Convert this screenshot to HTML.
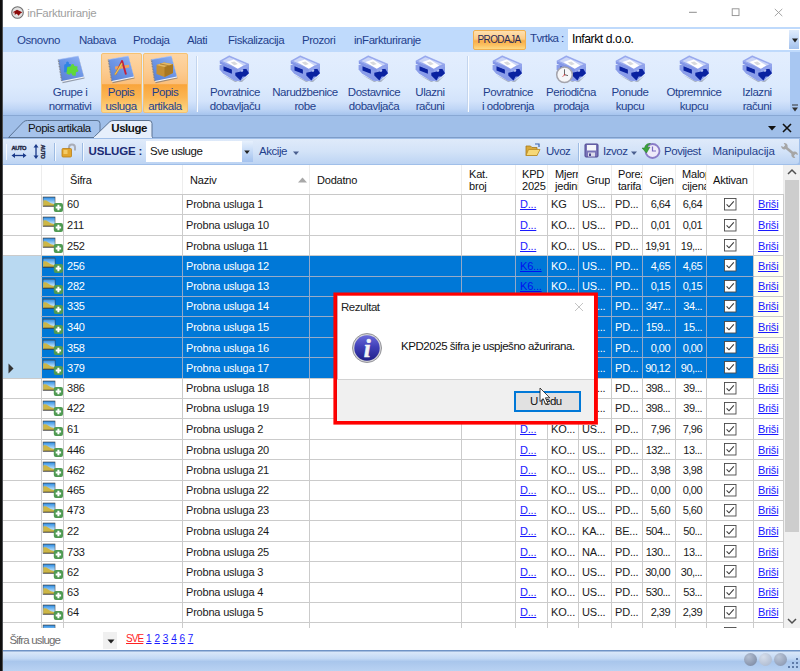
<!DOCTYPE html>
<html lang="hr"><head><meta charset="utf-8"><title>inFarkturiranje</title>
<style>
html,body{margin:0;padding:0;}
body{width:800px;height:671px;overflow:hidden;background:#fff;position:relative;font-family:"Liberation Sans",sans-serif;font-size:11.5px;letter-spacing:-0.45px;color:#111;}
.a{position:absolute;}
.t{position:absolute;white-space:nowrap;line-height:1;}
#desk{left:0;top:0;width:3px;height:671px;background:linear-gradient(to right,#0d0d0d 0,#101010 2px,#8a8f96 3px);}
#title{left:3px;top:0;width:797px;height:27px;background:#fff;}
#menubar{left:3px;top:27px;width:797px;height:25px;background:#bfdafc;}
.mi{position:absolute;top:35px;font-size:11.5px;color:#1f3f8c;white-space:nowrap;line-height:1;}
#ribbon{left:3px;top:52px;width:786.5px;height:62.5px;background:linear-gradient(#e3eefe 0,#dceafd 55%,#d3e3fb 78%,#c0d6f6 90%,#a6c4ee 100%);border-radius:0 0 3px 3px;}
.rb{position:absolute;font-size:11.5px;color:#1f3f8c;text-align:center;line-height:14px;white-space:nowrap;}
.hot{position:absolute;top:53px;height:60px;background:linear-gradient(#fdd5a4 0,#fccb90 30%,#fbbf7a 51%,#f9a53c 53%,#fbb654 75%,#fdd98a 100%);border:1px solid #f6c272;box-sizing:border-box;border-radius:2px;}
#tabstrip{left:3px;top:115px;width:797px;height:23px;background:#a0bfe9;}
#toolbar{left:3px;top:139px;width:795.5px;height:24.5px;background:linear-gradient(#dfeafa 0,#d3e3f8 50%,#bdd4f3 100%);border-radius:0 0 3px 0;}
#grid{left:3px;top:165px;width:781px;height:463px;background:#fff;overflow:hidden;}
.vl{position:absolute;width:1px;background:#cbcbcb;top:0;}
.hl{position:absolute;height:1px;background:#cbcbcb;left:38px;}
.hs{position:absolute;height:1px;background:#98abc8;left:38px;}
.vs{position:absolute;width:1px;background:#93a8c8;}
.c{position:absolute;white-space:nowrap;line-height:1;font-size:11px;letter-spacing:-0.2px;}
.lnk{color:#1a1aff;text-decoration:underline;}
.sel{position:absolute;background:#0078d7;}
.sel .c{color:#fff;}
</style></head><body>
<svg width="0" height="0" style="position:absolute"><defs>
<g id="rowic"><rect x="0.800" y="0.700" width="12.500" height="10" fill="#3c3c3c"/><rect x="1.300" y="1.400" width="11.500" height="8.600" fill="url(#sky)"/><path d="M1.300 9.700 V4.600 Q3.500 3.400 6 5.400 T12.800 8.200 V9.700 Z" fill="#cdb646"/><path d="M1.300 10 H12.800 V9.300 H1.300 Z" fill="#8f7c28"/><rect x="11.800" y="7" width="9.200" height="9" rx="2" fill="#4f9a52"/><path d="M16.400 8.800 V14.200 M13.700 11.500 H19.100" stroke="#fff" stroke-width="2"/></g>
<linearGradient id="sky" x1="0" y1="0" x2="0" y2="1"><stop offset="0" stop-color="#2f8fe6"/><stop offset="0.600" stop-color="#a6d3f5"/><stop offset="1" stop-color="#d6ecfb"/></linearGradient>
</defs></svg>

<div class="a" id="desk"></div>
<div class="a" id="title"></div>
<svg class="a" style="left:10.750px;top:5.600px" width="13" height="13" viewBox="0 0 13 13"><circle cx="6.500" cy="6.500" r="5.800" fill="#e2e2e2" stroke="#6f6f6f" stroke-width="1.100"/><path d="M1.800 6.300 L6 3.700 L11.300 6.300 L9.400 7.600 L7.600 9.700 L5.800 7.700 L3.800 8.700 Z" fill="#8b0a0a"/><path d="M2 6.600 L3.600 6.600 L3.800 8.400 L2.600 8.200 Z" fill="#f0dede"/></svg>
<div class="t" style="left:27.300px;top:8px;font-size:11.5px;letter-spacing:-0.3px;color:#a0a0a0">inFarkturiranje</div>
<svg class="a" style="left:686px;top:4px" width="100" height="16" viewBox="0 0 100 16"><path d="M3 8.300 H10.800" stroke="#8e8e8e" stroke-width="1" fill="none"/><rect x="46.200" y="4.800" width="6.800" height="6.800" stroke="#8e8e8e" stroke-width="0.900" fill="none"/><path d="M88.800 4.900 L96.300 12.100 M96.300 4.900 L88.800 12.100" stroke="#9a9a9a" stroke-width="0.900" fill="none"/></svg>
<div class="a" id="menubar"></div>
<div class="mi" style="left:17px">Osnovno</div>
<div class="mi" style="left:79px">Nabava</div>
<div class="mi" style="left:133px">Prodaja</div>
<div class="mi" style="left:187px">Alati</div>
<div class="mi" style="left:228px">Fiskalizacija</div>
<div class="mi" style="left:302px">Prozori</div>
<div class="mi" style="left:354px">inFarkturiranje</div>
<div class="a" style="left:473px;top:30px;width:52.5px;height:19.5px;box-sizing:border-box;border:1px solid #f0b050;border-radius:2px;background:linear-gradient(#fee0b0 0,#fccb86 45%,#f9ad48 55%,#fbc263 80%,#fdda85 100%)"></div>
<div class="t" style="left:477.5px;top:35px;font-size:10px;letter-spacing:-0.6px;color:#2a2a55">PRODAJA</div>
<div class="t" style="left:530px;top:33px;font-size:11.5px;letter-spacing:-0.6px;color:#1f3f8c">Tvrtka :</div>
<div class="a" style="left:567.500px;top:29px;width:232.500px;height:21px;background:#fff"></div>
<div class="t" style="left:572px;top:33px;font-size:12.2px;color:#000">Infarkt d.o.o.</div>
<div class="a" style="left:789px;top:29.500px;width:9.750px;height:19.500px;background:linear-gradient(#e0ecfc,#c3d8f6 50%,#a3c1ec)"></div>
<svg class="a" style="left:791px;top:38px" width="8" height="5"><path d="M1 0.5 H7 L4 4.5 Z" fill="#222"/></svg>
<div class="a" style="left:3px;top:52px;width:797px;height:63px;background:#a8c7f2"></div>
<div class="a" id="ribbon"></div>
<div class="hot" style="left:100.5px;width:41.5px"></div>
<div class="hot" style="left:143px;width:44.5px"></div>
<div class="a" style="left:196px;top:56px;width:1px;height:56px;background:#c3d5ee"></div><div class="a" style="left:197px;top:56px;width:1px;height:56px;background:#fafcff"></div>
<div class="a" style="left:467px;top:56px;width:1px;height:56px;background:#c3d5ee"></div><div class="a" style="left:468px;top:56px;width:1px;height:56px;background:#fafcff"></div>
<div class="rb" style="left:20px;top:85px;width:100px">Grupe i<br>normativi</div>
<div class="rb" style="left:71px;top:85px;width:100px">Popis<br>usluga</div>
<div class="rb" style="left:115px;top:85px;width:100px">Popis<br>artikala</div>
<div class="rb" style="left:185px;top:85px;width:100px">Povratnice<br>dobavljaču</div>
<div class="rb" style="left:255px;top:85px;width:100px">Narudžbenice<br>robe</div>
<div class="rb" style="left:324px;top:85px;width:100px">Dostavnice<br>dobavljača</div>
<div class="rb" style="left:380px;top:85px;width:100px">Ulazni<br>računi</div>
<div class="rb" style="left:458px;top:85px;width:100px">Povratnice<br>i odobrenja</div>
<div class="rb" style="left:521px;top:85px;width:100px">Periodična<br>prodaja</div>
<div class="rb" style="left:580px;top:85px;width:100px">Ponude<br>kupcu</div>
<div class="rb" style="left:644px;top:85px;width:100px">Otpremnice<br>kupcu</div>
<div class="rb" style="left:707px;top:85px;width:100px">Izlazni<br>računi</div>
<svg class="a" style="left:50px;top:52px" width="40" height="34" viewBox="0 0 40 34">
<defs><linearGradient id="nbg" x1="1" y1="0" x2="0.200" y2="1"><stop offset="0" stop-color="#93b4f6"/><stop offset="0.500" stop-color="#6f97e6"/><stop offset="1" stop-color="#5a82d6"/></linearGradient></defs>
<path d="M9 8.800 L28.800 5.200 L34.600 26.600 L12.600 31.200 Z" fill="#5a5f6c" opacity="0.550"/>
<path d="M8.900 8 L28.400 4.100 L34.200 25.400 L12.300 29.900 Z" fill="#f2f4f8"/>
<path d="M8.400 7.600 L28.400 4.100 L33.800 24.600 L11.700 29 Z" fill="url(#nbg)"/>
<path d="M8.400 7.600 L11.700 29" stroke="#7d818c" stroke-width="1.500" stroke-dasharray="0.900 0.700"/>
<path d="M8.400 7.600 L28.400 4.100" stroke="#a9c3f8" stroke-width="0.600"/>
<g transform="translate(21.300 16.800) scale(1.050) translate(-20.800 -16.600)"><path d="M14 13.500 Q14 12 15.500 12 L16 12 Q15.400 9.600 17.200 9.600 Q19 9.600 18.600 12 L20.300 12 L20.300 20 L14 20 Z" fill="#2f84e4"/><path d="M17 15 L20.500 14.200 Q20 12.200 22 12 Q24 12 23.600 14 L26.800 14.400 L26.400 17 Q28.200 17.200 27.400 19 Q26.600 20 25.400 19.400 L24.800 23.400 L21.600 22.800 Q21.800 20.800 20.400 20.800 Q19 20.800 19.200 22.400 L16.200 21 Z" fill="#5fd83a"/></g>
</svg>
<svg class="a" style="left:99.5px;top:52px" width="40" height="34" viewBox="0 0 40 34">
<defs><linearGradient id="nbg" x1="1" y1="0" x2="0.200" y2="1"><stop offset="0" stop-color="#93b4f6"/><stop offset="0.500" stop-color="#6f97e6"/><stop offset="1" stop-color="#5a82d6"/></linearGradient></defs>
<path d="M9 8.800 L28.800 5.200 L34.600 26.600 L12.600 31.200 Z" fill="#5a5f6c" opacity="0.550"/>
<path d="M8.900 8 L28.400 4.100 L34.200 25.400 L12.300 29.900 Z" fill="#f2f4f8"/>
<path d="M8.400 7.600 L28.400 4.100 L33.800 24.600 L11.700 29 Z" fill="url(#nbg)"/>
<path d="M8.400 7.600 L11.700 29" stroke="#7d818c" stroke-width="1.500" stroke-dasharray="0.900 0.700"/>
<path d="M8.400 7.600 L28.400 4.100" stroke="#a9c3f8" stroke-width="0.600"/>
<path d="M15 14.500 L29 12.800 L29.300 15.600 L15.300 17.400 Z" fill="#f2a25a"/><path d="M26 22.500 L22 8.500" fill="none" stroke="#c4203a" stroke-width="1.900"/><path d="M22 8.500 L15.500 22.500" fill="none" stroke="#c4203a" stroke-width="1.400"/><path d="M21.300 11 L15 21.500 L14.600 23.200 L16.200 22.300 L22.600 11.800 Z" fill="#f3ce55" stroke="#b98d20" stroke-width="0.300"/>
</svg>
<svg class="a" style="left:142.8px;top:52px" width="40" height="34" viewBox="0 0 40 34">
<defs><linearGradient id="nbg" x1="1" y1="0" x2="0.200" y2="1"><stop offset="0" stop-color="#93b4f6"/><stop offset="0.500" stop-color="#6f97e6"/><stop offset="1" stop-color="#5a82d6"/></linearGradient></defs>
<path d="M9 8.800 L28.800 5.200 L34.600 26.600 L12.600 31.200 Z" fill="#5a5f6c" opacity="0.550"/>
<path d="M8.900 8 L28.400 4.100 L34.200 25.400 L12.300 29.900 Z" fill="#f2f4f8"/>
<path d="M8.400 7.600 L28.400 4.100 L33.800 24.600 L11.700 29 Z" fill="url(#nbg)"/>
<path d="M8.400 7.600 L11.700 29" stroke="#7d818c" stroke-width="1.500" stroke-dasharray="0.900 0.700"/>
<path d="M8.400 7.600 L28.400 4.100" stroke="#a9c3f8" stroke-width="0.600"/>
<path d="M13.500 13 L21 10.600 L30 12.200 L30 21 L21.500 25 L13.500 22 Z" fill="#c48f34"/><path d="M13.500 13 L21 10.600 L30 12.200 L21.500 15 Z" fill="#e3b866"/><path d="M21.500 15 L30 12.200 L30 21 L21.500 25 Z" fill="#a87722"/><path d="M17 11.900 L25.700 13.700" stroke="#9a6d20" stroke-width="0.700"/>
</svg>
<svg class="a" style="left:214.0px;top:52px" width="40" height="34" viewBox="0 0 40 34">
<path d="M9 23 L21 30 L28 30 L35 23 L30 27 L24 30 Z" fill="#6a7080" opacity="0.450"/>
<path d="M5.600 13 L5.600 17.600 L9 21.500 L20.500 28.800 L23 29 L27 28.800 L31.400 24.600 L35 21 L35 13 Z" fill="#8a9de9"/>
<path d="M9.500 14.300 L17.900 17.500 L17.900 21.700 L9.500 18.500 Z" fill="#0a22a0"/>
<path d="M21.300 20.800 L27 19.600 Q29.600 19.600 28.600 17 L32.400 17 L35 21.300 L31.400 24.500 L28.600 24.500 L26.400 28.500 L21.300 23.500 Z" fill="#0a22a0"/><circle cx="28" cy="18.600" r="1.200" fill="#b4c1f2"/>
<path d="M5.800 9.100 L5.800 11.800 L23.800 20 L23.800 17.200 Z" fill="#8396e6"/>
<path d="M23.800 17.200 L35 12.200 L35 14.400 L23.800 20 Z" fill="#93a5ec"/>
<path d="M5.800 9.100 L15.200 3.800 L35 12.200 L23.800 17.200 Z" fill="#9aabee" stroke="#8597e8" stroke-width="0.500"/>
<path d="M8.400 9.100 L15.300 5.200 L32.400 12.300 L23.700 16.100 Z" fill="#ccd6f7"/>
<path d="M12.400 10.100 L19.800 7.400 L29.200 13.600 L23.800 16.800 Z" fill="#ffffff"/>
<path d="M16.700 10.600 L20.300 9.400 L23.800 11.900 L20.300 13.200 Z" fill="#d9dadd"/>

</svg>
<svg class="a" style="left:285.3px;top:52px" width="40" height="34" viewBox="0 0 40 34">
<path d="M9 23 L21 30 L28 30 L35 23 L30 27 L24 30 Z" fill="#6a7080" opacity="0.450"/>
<path d="M5.600 13 L5.600 17.600 L9 21.500 L20.500 28.800 L23 29 L27 28.800 L31.400 24.600 L35 21 L35 13 Z" fill="#8a9de9"/>
<path d="M9.500 14.300 L17.900 17.500 L17.900 21.700 L9.500 18.500 Z" fill="#0a22a0"/>
<path d="M21.300 20.800 L27 19.600 Q29.600 19.600 28.600 17 L32.400 17 L35 21.300 L31.400 24.500 L28.600 24.500 L26.400 28.500 L21.300 23.500 Z" fill="#0a22a0"/><circle cx="28" cy="18.600" r="1.200" fill="#b4c1f2"/>
<path d="M5.800 9.100 L5.800 11.800 L23.800 20 L23.800 17.200 Z" fill="#8396e6"/>
<path d="M23.800 17.200 L35 12.200 L35 14.400 L23.800 20 Z" fill="#93a5ec"/>
<path d="M5.800 9.100 L15.200 3.800 L35 12.200 L23.800 17.200 Z" fill="#9aabee" stroke="#8597e8" stroke-width="0.500"/>
<path d="M8.400 9.100 L15.300 5.200 L32.400 12.300 L23.700 16.100 Z" fill="#ccd6f7"/>
<path d="M12.400 10.100 L19.800 7.400 L29.200 13.600 L23.800 16.800 Z" fill="#ffffff"/>
<path d="M16.700 10.600 L20.300 9.400 L23.800 11.900 L20.300 13.200 Z" fill="#d9dadd"/>

</svg>
<svg class="a" style="left:352.8px;top:52px" width="40" height="34" viewBox="0 0 40 34">
<path d="M9 23 L21 30 L28 30 L35 23 L30 27 L24 30 Z" fill="#6a7080" opacity="0.450"/>
<path d="M5.600 13 L5.600 17.600 L9 21.500 L20.500 28.800 L23 29 L27 28.800 L31.400 24.600 L35 21 L35 13 Z" fill="#8a9de9"/>
<path d="M9.500 14.300 L17.900 17.500 L17.900 21.700 L9.500 18.500 Z" fill="#0a22a0"/>
<path d="M21.300 20.800 L27 19.600 Q29.600 19.600 28.600 17 L32.400 17 L35 21.300 L31.400 24.500 L28.600 24.500 L26.400 28.500 L21.300 23.500 Z" fill="#0a22a0"/><circle cx="28" cy="18.600" r="1.200" fill="#b4c1f2"/>
<path d="M5.800 9.100 L5.800 11.800 L23.800 20 L23.800 17.200 Z" fill="#8396e6"/>
<path d="M23.800 17.200 L35 12.200 L35 14.400 L23.800 20 Z" fill="#93a5ec"/>
<path d="M5.800 9.100 L15.200 3.800 L35 12.200 L23.800 17.200 Z" fill="#9aabee" stroke="#8597e8" stroke-width="0.500"/>
<path d="M8.400 9.100 L15.300 5.200 L32.400 12.300 L23.700 16.100 Z" fill="#ccd6f7"/>
<path d="M12.400 10.100 L19.800 7.400 L29.200 13.600 L23.800 16.800 Z" fill="#ffffff"/>
<path d="M16.700 10.600 L20.300 9.400 L23.800 11.900 L20.300 13.200 Z" fill="#d9dadd"/>

</svg>
<svg class="a" style="left:409.8px;top:52px" width="40" height="34" viewBox="0 0 40 34">
<path d="M9 23 L21 30 L28 30 L35 23 L30 27 L24 30 Z" fill="#6a7080" opacity="0.450"/>
<path d="M5.600 13 L5.600 17.600 L9 21.500 L20.500 28.800 L23 29 L27 28.800 L31.400 24.600 L35 21 L35 13 Z" fill="#8a9de9"/>
<path d="M9.500 14.300 L17.900 17.500 L17.900 21.700 L9.500 18.500 Z" fill="#0a22a0"/>
<path d="M21.300 20.800 L27 19.600 Q29.600 19.600 28.600 17 L32.400 17 L35 21.300 L31.400 24.500 L28.600 24.500 L26.400 28.500 L21.300 23.500 Z" fill="#0a22a0"/><circle cx="28" cy="18.600" r="1.200" fill="#b4c1f2"/>
<path d="M5.800 9.100 L5.800 11.800 L23.800 20 L23.800 17.200 Z" fill="#8396e6"/>
<path d="M23.800 17.200 L35 12.200 L35 14.400 L23.800 20 Z" fill="#93a5ec"/>
<path d="M5.800 9.100 L15.200 3.800 L35 12.200 L23.800 17.200 Z" fill="#9aabee" stroke="#8597e8" stroke-width="0.500"/>
<path d="M8.400 9.100 L15.300 5.200 L32.400 12.300 L23.700 16.100 Z" fill="#ccd6f7"/>
<path d="M12.400 10.100 L19.800 7.400 L29.200 13.600 L23.800 16.800 Z" fill="#ffffff"/>
<path d="M16.700 10.600 L20.300 9.400 L23.800 11.900 L20.300 13.200 Z" fill="#d9dadd"/>

</svg>
<svg class="a" style="left:487.3px;top:52px" width="40" height="34" viewBox="0 0 40 34">
<path d="M9 23 L21 30 L28 30 L35 23 L30 27 L24 30 Z" fill="#6a7080" opacity="0.450"/>
<path d="M5.600 13 L5.600 17.600 L9 21.500 L20.500 28.800 L23 29 L27 28.800 L31.400 24.600 L35 21 L35 13 Z" fill="#8a9de9"/>
<path d="M9.500 14.300 L17.900 17.500 L17.900 21.700 L9.500 18.500 Z" fill="#0a22a0"/>
<path d="M21.300 20.800 L27 19.600 Q29.600 19.600 28.600 17 L32.400 17 L35 21.300 L31.400 24.500 L28.600 24.500 L26.400 28.500 L21.300 23.500 Z" fill="#0a22a0"/><circle cx="28" cy="18.600" r="1.200" fill="#b4c1f2"/>
<path d="M5.800 9.100 L5.800 11.800 L23.800 20 L23.800 17.200 Z" fill="#8396e6"/>
<path d="M23.800 17.200 L35 12.200 L35 14.400 L23.800 20 Z" fill="#93a5ec"/>
<path d="M5.800 9.100 L15.200 3.800 L35 12.200 L23.800 17.200 Z" fill="#9aabee" stroke="#8597e8" stroke-width="0.500"/>
<path d="M8.400 9.100 L15.300 5.200 L32.400 12.300 L23.700 16.100 Z" fill="#ccd6f7"/>
<path d="M12.400 10.100 L19.800 7.400 L29.200 13.600 L23.800 16.800 Z" fill="#ffffff"/>
<path d="M16.700 10.600 L20.300 9.400 L23.800 11.900 L20.300 13.200 Z" fill="#d9dadd"/>

</svg>
<svg class="a" style="left:610.3px;top:52px" width="40" height="34" viewBox="0 0 40 34">
<path d="M9 23 L21 30 L28 30 L35 23 L30 27 L24 30 Z" fill="#6a7080" opacity="0.450"/>
<path d="M5.600 13 L5.600 17.600 L9 21.500 L20.500 28.800 L23 29 L27 28.800 L31.400 24.600 L35 21 L35 13 Z" fill="#8a9de9"/>
<path d="M9.500 14.300 L17.900 17.500 L17.900 21.700 L9.500 18.500 Z" fill="#0a22a0"/>
<path d="M21.300 20.800 L27 19.600 Q29.600 19.600 28.600 17 L32.400 17 L35 21.300 L31.400 24.500 L28.600 24.500 L26.400 28.500 L21.300 23.500 Z" fill="#0a22a0"/><circle cx="28" cy="18.600" r="1.200" fill="#b4c1f2"/>
<path d="M5.800 9.100 L5.800 11.800 L23.800 20 L23.800 17.200 Z" fill="#8396e6"/>
<path d="M23.800 17.200 L35 12.200 L35 14.400 L23.800 20 Z" fill="#93a5ec"/>
<path d="M5.800 9.100 L15.200 3.800 L35 12.200 L23.800 17.200 Z" fill="#9aabee" stroke="#8597e8" stroke-width="0.500"/>
<path d="M8.400 9.100 L15.300 5.200 L32.400 12.300 L23.700 16.100 Z" fill="#ccd6f7"/>
<path d="M12.400 10.100 L19.800 7.400 L29.200 13.600 L23.800 16.800 Z" fill="#ffffff"/>
<path d="M16.700 10.600 L20.300 9.400 L23.800 11.900 L20.300 13.200 Z" fill="#d9dadd"/>

</svg>
<svg class="a" style="left:673.8px;top:52px" width="40" height="34" viewBox="0 0 40 34">
<path d="M9 23 L21 30 L28 30 L35 23 L30 27 L24 30 Z" fill="#6a7080" opacity="0.450"/>
<path d="M5.600 13 L5.600 17.600 L9 21.500 L20.500 28.800 L23 29 L27 28.800 L31.400 24.600 L35 21 L35 13 Z" fill="#8a9de9"/>
<path d="M9.500 14.300 L17.900 17.500 L17.900 21.700 L9.500 18.500 Z" fill="#0a22a0"/>
<path d="M21.300 20.800 L27 19.600 Q29.600 19.600 28.600 17 L32.400 17 L35 21.300 L31.400 24.500 L28.600 24.500 L26.400 28.500 L21.300 23.500 Z" fill="#0a22a0"/><circle cx="28" cy="18.600" r="1.200" fill="#b4c1f2"/>
<path d="M5.800 9.100 L5.800 11.800 L23.800 20 L23.800 17.200 Z" fill="#8396e6"/>
<path d="M23.800 17.200 L35 12.200 L35 14.400 L23.800 20 Z" fill="#93a5ec"/>
<path d="M5.800 9.100 L15.200 3.800 L35 12.200 L23.800 17.200 Z" fill="#9aabee" stroke="#8597e8" stroke-width="0.500"/>
<path d="M8.400 9.100 L15.300 5.200 L32.400 12.300 L23.700 16.100 Z" fill="#ccd6f7"/>
<path d="M12.400 10.100 L19.800 7.400 L29.200 13.600 L23.800 16.800 Z" fill="#ffffff"/>
<path d="M16.700 10.600 L20.300 9.400 L23.800 11.900 L20.300 13.200 Z" fill="#d9dadd"/>

</svg>
<svg class="a" style="left:736.8px;top:52px" width="40" height="34" viewBox="0 0 40 34">
<path d="M9 23 L21 30 L28 30 L35 23 L30 27 L24 30 Z" fill="#6a7080" opacity="0.450"/>
<path d="M5.600 13 L5.600 17.600 L9 21.500 L20.500 28.800 L23 29 L27 28.800 L31.400 24.600 L35 21 L35 13 Z" fill="#8a9de9"/>
<path d="M9.500 14.300 L17.900 17.500 L17.900 21.700 L9.500 18.500 Z" fill="#0a22a0"/>
<path d="M21.300 20.800 L27 19.600 Q29.600 19.600 28.600 17 L32.400 17 L35 21.300 L31.400 24.500 L28.600 24.500 L26.400 28.500 L21.300 23.500 Z" fill="#0a22a0"/><circle cx="28" cy="18.600" r="1.200" fill="#b4c1f2"/>
<path d="M5.800 9.100 L5.800 11.800 L23.800 20 L23.800 17.200 Z" fill="#8396e6"/>
<path d="M23.800 17.200 L35 12.200 L35 14.400 L23.800 20 Z" fill="#93a5ec"/>
<path d="M5.800 9.100 L15.200 3.800 L35 12.200 L23.800 17.200 Z" fill="#9aabee" stroke="#8597e8" stroke-width="0.500"/>
<path d="M8.400 9.100 L15.300 5.200 L32.400 12.300 L23.700 16.100 Z" fill="#ccd6f7"/>
<path d="M12.400 10.100 L19.800 7.400 L29.200 13.600 L23.800 16.800 Z" fill="#ffffff"/>
<path d="M16.700 10.600 L20.300 9.400 L23.800 11.900 L20.300 13.200 Z" fill="#d9dadd"/>

</svg>
<svg class="a" style="left:550.5px;top:52px" width="40" height="34" viewBox="0 0 40 34">
<path d="M9 23 L21 30 L28 30 L35 23 L30 27 L24 30 Z" fill="#6a7080" opacity="0.450"/>
<path d="M5.600 13 L5.600 17.600 L9 21.500 L20.500 28.800 L23 29 L27 28.800 L31.400 24.600 L35 21 L35 13 Z" fill="#8a9de9"/>
<path d="M9.500 14.300 L17.900 17.500 L17.900 21.700 L9.500 18.500 Z" fill="#0a22a0"/>
<path d="M21.300 20.800 L27 19.600 Q29.600 19.600 28.600 17 L32.400 17 L35 21.300 L31.400 24.500 L28.600 24.500 L26.400 28.500 L21.300 23.500 Z" fill="#0a22a0"/><circle cx="28" cy="18.600" r="1.200" fill="#b4c1f2"/>
<path d="M5.800 9.100 L5.800 11.800 L23.800 20 L23.800 17.200 Z" fill="#8396e6"/>
<path d="M23.800 17.200 L35 12.200 L35 14.400 L23.800 20 Z" fill="#93a5ec"/>
<path d="M5.800 9.100 L15.200 3.800 L35 12.200 L23.800 17.200 Z" fill="#9aabee" stroke="#8597e8" stroke-width="0.500"/>
<path d="M8.400 9.100 L15.300 5.200 L32.400 12.300 L23.700 16.100 Z" fill="#ccd6f7"/>
<path d="M12.400 10.100 L19.800 7.400 L29.200 13.600 L23.800 16.800 Z" fill="#ffffff"/>
<path d="M16.700 10.600 L20.300 9.400 L23.800 11.900 L20.300 13.200 Z" fill="#d9dadd"/>
<circle cx="13.500" cy="22.700" r="7.800" fill="#f6f6f8" stroke="#a4a4ac" stroke-width="1.500"/><path d="M13.500 17.300 V22.700 L17 23.600" stroke="#444" stroke-width="0.800" fill="none"/><path d="M13.500 22.700 L11.400 25" stroke="#c33" stroke-width="0.600"/><circle cx="13.500" cy="22.700" r="0.700" fill="#c33"/>
</svg>
<svg class="a" style="left:791px;top:104px" width="8" height="9"><path d="M1 1 H7" stroke="#333" stroke-width="1"/><path d="M1 3.500 H7 L4 7.500 Z" fill="#333"/></svg>
<div class="a" id="tabstrip"></div>
<div class="a" style="left:3px;top:137px;width:797px;height:1.500px;background:#7d9cc8"></div>
<svg class="a" style="left:3px;top:118px" width="160" height="20" viewBox="0 0 160 20">
<path d="M5.500 19.500 L20.500 3.800 Q22 2.500 24.500 2.500 H94 Q97 2.5 97 5.5 V19.5 Z" fill="#a6c3eb" stroke="#5a7394" stroke-width="1"/>
<path d="M90 20 L107 3.5 Q108.500 2.500 111 2.500 H146 Q149 2.500 149 5.500 V20 Z" fill="#e6effc" stroke="#5a7394" stroke-width="1"/>
<path d="M91 19.5 H149" stroke="#e6effc" stroke-width="1.500"/>
</svg>
<div class="t" style="left:28px;top:123px;font-size:11.5px;color:#111">Popis artikala</div>
<div class="t" style="left:111.300px;top:123px;font-size:11.5px;font-weight:bold;color:#111">Usluge</div>
<svg class="a" style="left:766px;top:122px" width="30" height="12"><path d="M2 4 H10 L6 8.500 Z" fill="#111"/><path d="M17 2 L25 10 M25 2 L17 10" stroke="#111" stroke-width="1.600"/></svg>
<div class="a" style="left:3px;top:138px;width:797px;height:27px;background:#a0bfe9"></div>
<div class="a" style="left:3px;top:114.500px;width:797px;height:1.500px;background:#89a8d4"></div>
<div class="a" id="toolbar"></div>
<div class="a" style="left:6px;top:144px;width:1px;height:16px;background:#f6f9fe"></div>
<svg class="a" style="left:11px;top:144px" width="16" height="15" viewBox="0 0 16 15"><text x="0.500" y="6.300" font-family="Liberation Sans, sans-serif" font-size="6" font-weight="bold" fill="#1c2440" stroke="#1c2440" stroke-width="0.350" textLength="14.500" lengthAdjust="spacingAndGlyphs">AUTO</text><path d="M3 11.500 H13" stroke="#1a3a8a" stroke-width="1.300"/><path d="M0.500 11.500 L4 9 V14 Z M15.500 11.500 L12 9 V14 Z" fill="#1a3a8a"/></svg>
<svg class="a" style="left:32px;top:143px" width="16" height="17" viewBox="0 0 16 17"><path d="M4 3.500 V13.500" stroke="#1a3a8a" stroke-width="1.300"/><path d="M4 1 L1.500 4.500 H6.500 Z M4 16 L1.500 12.500 H6.500 Z" fill="#1a3a8a"/><text transform="translate(9.300 1.500) rotate(90)" font-family="Liberation Sans, sans-serif" font-size="6" font-weight="bold" fill="#1c2440" stroke="#1c2440" stroke-width="0.350" textLength="14" lengthAdjust="spacingAndGlyphs">AUTO</text></svg>
<div class="a" style="left:54px;top:143px;width:1px;height:18px;background:#9dbbe3"></div><div class="a" style="left:55px;top:143px;width:1px;height:18px;background:#f3f8fe"></div>
<svg class="a" style="left:61px;top:143px" width="16" height="15" viewBox="0 0 16 15"><path d="M8 7 V4.500 Q8 1.500 11 1.500 Q14 1.500 14 4.500 V7.500" fill="none" stroke="#a9adb8" stroke-width="2"/><rect x="1" y="5.500" width="9.500" height="8.500" rx="1" fill="#e2a52c" stroke="#b97d14" stroke-width="0.800"/><rect x="2.500" y="7" width="4" height="4" fill="#f4cb66"/></svg>
<div class="a" style="left:82px;top:143px;width:1px;height:18px;background:#9dbbe3"></div><div class="a" style="left:83px;top:143px;width:1px;height:18px;background:#f3f8fe"></div>
<div class="t" id="uslbl" style="left:88.500px;top:146px;font-size:11.5px;letter-spacing:-0.150px;font-weight:bold;color:#1a2a74">USLUGE :</div>
<div class="a" style="left:146px;top:141px;width:96px;height:21px;background:#fff"></div>
<div class="t" id="sveusl" style="left:150px;top:146px;font-size:11.5px;color:#111">Sve usluge</div>
<div class="a" style="left:241.500px;top:141px;width:11px;height:21px;background:linear-gradient(#e6f0fd,#c4d9f6 50%,#a4c2ee)"></div>
<svg class="a" style="left:243px;top:150px" width="8" height="5"><path d="M1.200 0.500 H6.800 L4 4 Z" fill="#222"/></svg>
<div class="t" id="akcije" style="left:259px;top:146px;font-size:11.5px;color:#1f3f8c">Akcije</div>
<svg class="a" style="left:292px;top:151px" width="8" height="5"><path d="M1 0.500 H7 L4 4 Z" fill="#4a5f8f"/></svg>
<svg class="a" style="left:525px;top:143px" width="16" height="14" viewBox="0 0 16 14"><path d="M1 3 H5.500 L7 4.500 H12 V12.500 H1 Z" fill="#d9a93a" stroke="#a67a1c" stroke-width="0.800"/><path d="M3.500 6.500 H15 L12 12.500 H1 Z" fill="#f6d877" stroke="#b88a24" stroke-width="0.800"/><path d="M10 1 H14 V4" fill="none" stroke="#3a64b0" stroke-width="1.200"/></svg>
<div class="t" id="uvoz" style="left:546px;top:146px;font-size:11.5px;color:#1f3f8c">Uvoz</div>
<div class="a" style="left:578px;top:143px;width:1px;height:18px;background:#9dbbe3"></div><div class="a" style="left:579px;top:143px;width:1px;height:18px;background:#f3f8fe"></div>
<svg class="a" style="left:584px;top:143px" width="15" height="15" viewBox="0 0 15 15"><rect x="1" y="1" width="13" height="13" rx="1" fill="#7a74b8" stroke="#4c4790" stroke-width="1"/><rect x="3" y="2" width="9" height="5.500" fill="#f4f5fa"/><rect x="4" y="9.500" width="7" height="4" fill="#dcdcea"/><rect x="5" y="10.500" width="2" height="2.500" fill="#4c4790"/></svg>
<div class="t" id="izvoz" style="left:603px;top:146px;font-size:11.5px;color:#1f3f8c">Izvoz</div>
<svg class="a" style="left:630px;top:151px" width="8" height="5"><path d="M1 0.500 H7 L4 4 Z" fill="#4a5f8f"/></svg>
<svg class="a" style="left:641px;top:142px" width="20" height="17" viewBox="0 0 20 17"><circle cx="11.500" cy="9" r="7" fill="#eeeafa" stroke="#8a7cc8" stroke-width="1.800"/><path d="M11.500 4.500 V9 H15" stroke="#7a6cc0" stroke-width="1.200" fill="none"/><path d="M1 6 L5.500 11 L9 5 L6 5.500 Q6.500 2.500 9.500 1.500 Q4.500 1 3.500 6 Z" fill="#3aa43a" stroke="#2a7a2a" stroke-width="0.500"/></svg>
<div class="t" id="povijest" style="left:664px;top:146px;font-size:11.5px;color:#1f3f8c">Povijest</div>
<div class="t" id="manip" style="left:712.4px;top:146px;font-size:11.5px;letter-spacing:-0.13px;color:#1f3f8c">Manipulacija</div>
<svg class="a" style="left:780px;top:141px" width="19" height="19" viewBox="0 0 19 19"><g transform="rotate(40 9.500 9.500)"><path d="M3.600 8.200 H15.400 V10.800 H3.600 Z" fill="#a6a6a6"/><path d="M0.200 7.500 A3.300 3.300 0 1 1 0.200 11.500 L2.800 10.600 V8.400 Z" fill="#a6a6a6"/><path d="M18.800 7.500 A3.300 3.300 0 1 0 18.800 11.500 L16.200 10.600 V8.400 Z" fill="#a6a6a6"/></g></svg>
<div class="a" id="grid">
<div class="a" style="left:0;top:0;width:781px;height:29px;background:#fff"></div>
<div class="a" style="left:0;top:90px;width:38px;height:123px;background:#b9d9f1"></div>
<div class="a" style="left:38px;top:90px;width:712.5px;height:123px;background:#0078d7"></div>
<div class="vl" style="left:38px;height:463px"></div>
<div class="a" style="left:38px;top:0;width:1px;height:29px;background:#ededed"></div>
<div class="vl" style="left:60px;height:463px"></div>
<div class="a" style="left:60px;top:0;width:1px;height:29px;background:#ededed"></div>
<div class="vs" style="left:60px;top:90px;height:123px"></div>
<div class="vl" style="left:179px;height:463px"></div>
<div class="a" style="left:179px;top:0;width:1px;height:29px;background:#ededed"></div>
<div class="vs" style="left:179px;top:90px;height:123px"></div>
<div class="vl" style="left:306px;height:463px"></div>
<div class="a" style="left:306px;top:0;width:1px;height:29px;background:#ededed"></div>
<div class="vs" style="left:306px;top:90px;height:123px"></div>
<div class="vl" style="left:458px;height:463px"></div>
<div class="a" style="left:458px;top:0;width:1px;height:29px;background:#ededed"></div>
<div class="vs" style="left:458px;top:90px;height:123px"></div>
<div class="vl" style="left:512px;height:463px"></div>
<div class="a" style="left:512px;top:0;width:1px;height:29px;background:#ededed"></div>
<div class="vs" style="left:512px;top:90px;height:123px"></div>
<div class="vl" style="left:544px;height:463px"></div>
<div class="a" style="left:544px;top:0;width:1px;height:29px;background:#ededed"></div>
<div class="vs" style="left:544px;top:90px;height:123px"></div>
<div class="vl" style="left:575px;height:463px"></div>
<div class="a" style="left:575px;top:0;width:1px;height:29px;background:#ededed"></div>
<div class="vs" style="left:575px;top:90px;height:123px"></div>
<div class="vl" style="left:608px;height:463px"></div>
<div class="a" style="left:608px;top:0;width:1px;height:29px;background:#ededed"></div>
<div class="vs" style="left:608px;top:90px;height:123px"></div>
<div class="vl" style="left:639px;height:463px"></div>
<div class="a" style="left:639px;top:0;width:1px;height:29px;background:#ededed"></div>
<div class="vs" style="left:639px;top:90px;height:123px"></div>
<div class="vl" style="left:672px;height:463px"></div>
<div class="a" style="left:672px;top:0;width:1px;height:29px;background:#ededed"></div>
<div class="vs" style="left:672px;top:90px;height:123px"></div>
<div class="vl" style="left:703px;height:463px"></div>
<div class="a" style="left:703px;top:0;width:1px;height:29px;background:#ededed"></div>
<div class="vs" style="left:703px;top:90px;height:123px"></div>
<div class="vl" style="left:750px;height:463px"></div>
<div class="a" style="left:750px;top:0;width:1px;height:29px;background:#ededed"></div>
<div class="vl" style="left:780px;height:463px"></div>
<div class="a" style="left:780px;top:0;width:1px;height:29px;background:#ededed"></div>
<div class="a" style="left:0;top:29px;width:781px;height:1px;background:#c8c8c8"></div>
<div class="hl" style="top:49px;left:0;width:781px"></div>
<div class="hl" style="top:70px;left:0;width:781px"></div>
<div class="hl" style="top:90px;left:0;width:781px"></div>
<div class="hs" style="top:111px;width:713px;"></div>
<div class="hl" style="top:111px;left:751px;width:30px;"></div>
<div class="hs" style="top:131px;width:713px;"></div>
<div class="hl" style="top:131px;left:751px;width:30px;"></div>
<div class="hs" style="top:151px;width:713px;"></div>
<div class="hl" style="top:151px;left:751px;width:30px;"></div>
<div class="hs" style="top:172px;width:713px;"></div>
<div class="hl" style="top:172px;left:751px;width:30px;"></div>
<div class="hs" style="top:192px;width:713px;"></div>
<div class="hl" style="top:192px;left:751px;width:30px;"></div>
<div class="hl" style="top:213px;left:0;width:781px"></div>
<div class="hl" style="top:233px;left:0;width:781px"></div>
<div class="hl" style="top:253px;left:0;width:781px"></div>
<div class="hl" style="top:274px;left:0;width:781px"></div>
<div class="hl" style="top:294px;left:0;width:781px"></div>
<div class="hl" style="top:315px;left:0;width:781px"></div>
<div class="hl" style="top:335px;left:0;width:781px"></div>
<div class="hl" style="top:355px;left:0;width:781px"></div>
<div class="hl" style="top:376px;left:0;width:781px"></div>
<div class="hl" style="top:396px;left:0;width:781px"></div>
<div class="hl" style="top:417px;left:0;width:781px"></div>
<div class="hl" style="top:437px;left:0;width:781px"></div>
<div class="hl" style="top:457px;left:0;width:781px"></div>
<div class="hl" style="top:478px;left:0;width:781px"></div>
<div class="c" style="left:67px;top:10px">Šifra</div>
<div class="c" style="left:187px;top:10px">Naziv</div>
<div class="c" style="left:314px;top:10px">Dodatno</div>
<div class="c" style="left:466px;top:4px">Kat.</div>
<div class="c" style="left:466px;top:16px">broj</div>
<div class="c" style="left:519px;top:4px">KPD</div>
<div class="c" style="left:519px;top:16px">2025</div>
<div class="a" style="left:545px;top:1px;width:29.5px;height:28px;overflow:hidden"><div class="c" style="left:7px;top:3px">Mjerna</div><div class="c" style="left:7px;top:15px">jedinica</div></div>
<div class="a" style="left:576.5px;top:1px;width:30.5px;height:28px;overflow:hidden"><div class="c" style="left:7px;top:9px">Grupa</div></div>
<div class="a" style="left:609px;top:1px;width:29.5px;height:28px;overflow:hidden"><div class="c" style="left:6px;top:3px">Porezna</div><div class="c" style="left:6px;top:15px">tarifa</div></div>
<div class="a" style="left:640.5px;top:1px;width:30.5px;height:28px;overflow:hidden"><div class="c" style="left:6px;top:9px">Cijena</div></div>
<div class="a" style="left:673px;top:1px;width:29.5px;height:28px;overflow:hidden"><div class="c" style="left:6px;top:3px">Malop.</div><div class="c" style="left:6px;top:15px">cijena</div></div>
<div class="c" style="left:710px;top:10px">Aktivan</div>
<svg class="a" style="left:295px;top:12px" width="9" height="6"><path d="M0 5.500 L4.500 0.500 L9 5.500 Z" fill="#a8a8a8"/></svg>
<svg class="a" style="left:39px;top:31px" width="21" height="17" viewBox="0 0 21 17"><use href="#rowic"/></svg>
<div class="c " style="left:64px;top:34px;color:#1a1a1a">60</div>
<div class="c " style="left:183px;top:34px;color:#1a1a1a">Probna usluga 1</div>
<div class="c lnk" style="left:517px;top:34px;color:#1a1aff">D...</div>
<div class="c " style="left:548px;top:34px;color:#1a1a1a">KG</div>
<div class="c " style="left:579px;top:34px;color:#1a1a1a">US...</div>
<div class="c " style="left:612px;top:34px;color:#1a1a1a">PD...</div>
<div class="c" style="right:114px;top:34px;color:#1a1a1a;letter-spacing:-0.55px">6,64</div>
<div class="c" style="right:82px;top:34px;color:#1a1a1a;letter-spacing:-0.55px">6,64</div>
<svg class="a" style="left:721px;top:33px" width="13" height="13" viewBox="0 0 13 13"><rect x="0.500" y="0.500" width="11.500" height="11.500" fill="#fff" stroke="#4a4a4a" stroke-width="0.900"/><path d="M2.600 6.400 L5 8.800 L9.800 3.400" fill="none" stroke="#3a3a3a" stroke-width="1.100"/></svg>
<div class="c lnk" style="left:755px;top:34px;color:#1a1aff">Briši</div>
<svg class="a" style="left:39px;top:51px" width="21" height="17" viewBox="0 0 21 17"><use href="#rowic"/></svg>
<div class="c " style="left:64px;top:55px;color:#1a1a1a">211</div>
<div class="c " style="left:183px;top:55px;color:#1a1a1a">Probna usluga 10</div>
<div class="c lnk" style="left:517px;top:55px;color:#1a1aff">D...</div>
<div class="c " style="left:548px;top:55px;color:#1a1a1a">KO...</div>
<div class="c " style="left:579px;top:55px;color:#1a1a1a">US...</div>
<div class="c " style="left:612px;top:55px;color:#1a1a1a">PD...</div>
<div class="c" style="right:114px;top:55px;color:#1a1a1a;letter-spacing:-0.55px">0,01</div>
<div class="c" style="right:82px;top:55px;color:#1a1a1a;letter-spacing:-0.55px">0,01</div>
<svg class="a" style="left:721px;top:54px" width="13" height="13" viewBox="0 0 13 13"><rect x="0.500" y="0.500" width="11.500" height="11.500" fill="#fff" stroke="#4a4a4a" stroke-width="0.900"/><path d="M2.600 6.400 L5 8.800 L9.800 3.400" fill="none" stroke="#3a3a3a" stroke-width="1.100"/></svg>
<div class="c lnk" style="left:755px;top:55px;color:#1a1aff">Briši</div>
<svg class="a" style="left:39px;top:72px" width="21" height="17" viewBox="0 0 21 17"><use href="#rowic"/></svg>
<div class="c " style="left:64px;top:76px;color:#1a1a1a">252</div>
<div class="c " style="left:183px;top:76px;color:#1a1a1a">Probna usluga 11</div>
<div class="c lnk" style="left:517px;top:76px;color:#1a1aff">D...</div>
<div class="c " style="left:548px;top:76px;color:#1a1a1a">KO...</div>
<div class="c " style="left:579px;top:76px;color:#1a1a1a">US...</div>
<div class="c " style="left:612px;top:76px;color:#1a1a1a">PD...</div>
<div class="c" style="right:114px;top:76px;color:#1a1a1a;letter-spacing:-0.55px">19,91</div>
<div class="c" style="right:82px;top:76px;color:#1a1a1a;letter-spacing:-0.55px">19,...</div>
<svg class="a" style="left:721px;top:74px" width="13" height="13" viewBox="0 0 13 13"><rect x="0.500" y="0.500" width="11.500" height="11.500" fill="#fff" stroke="#4a4a4a" stroke-width="0.900"/><path d="M2.600 6.400 L5 8.800 L9.800 3.400" fill="none" stroke="#3a3a3a" stroke-width="1.100"/></svg>
<div class="c lnk" style="left:755px;top:76px;color:#1a1aff">Briši</div>
<svg class="a" style="left:39px;top:92px" width="21" height="17" viewBox="0 0 21 17"><use href="#rowic"/></svg>
<div class="c " style="left:64px;top:96px;color:#fff">256</div>
<div class="c " style="left:183px;top:96px;color:#fff">Probna usluga 12</div>
<div class="c lnk" style="left:517px;top:96px;color:#0010f0">K6...</div>
<div class="c " style="left:548px;top:96px;color:#fff">KO...</div>
<div class="c " style="left:579px;top:96px;color:#fff">US...</div>
<div class="c " style="left:612px;top:96px;color:#fff">PD...</div>
<div class="c" style="right:114px;top:96px;color:#fff;letter-spacing:-0.55px">4,65</div>
<div class="c" style="right:82px;top:96px;color:#fff;letter-spacing:-0.55px">4,65</div>
<svg class="a" style="left:721px;top:94px" width="13" height="13" viewBox="0 0 13 13"><rect x="0.500" y="0.500" width="11.500" height="11.500" fill="#fff" stroke="#4a4a4a" stroke-width="0.900"/><path d="M2.600 6.400 L5 8.800 L9.800 3.400" fill="none" stroke="#3a3a3a" stroke-width="1.100"/></svg>
<div class="a" style="left:751px;top:91px;width:29px;height:20px;background:#fffff2"></div>
<div class="c lnk" style="left:755px;top:96px;color:#1a1aff">Briši</div>
<svg class="a" style="left:39px;top:113px" width="21" height="17" viewBox="0 0 21 17"><use href="#rowic"/></svg>
<div class="c " style="left:64px;top:116px;color:#fff">282</div>
<div class="c " style="left:183px;top:116px;color:#fff">Probna usluga 13</div>
<div class="c lnk" style="left:517px;top:116px;color:#0010f0">K6...</div>
<div class="c " style="left:548px;top:116px;color:#fff">KO...</div>
<div class="c " style="left:579px;top:116px;color:#fff">US...</div>
<div class="c " style="left:612px;top:116px;color:#fff">PD...</div>
<div class="c" style="right:114px;top:116px;color:#fff;letter-spacing:-0.55px">0,15</div>
<div class="c" style="right:82px;top:116px;color:#fff;letter-spacing:-0.55px">0,15</div>
<svg class="a" style="left:721px;top:115px" width="13" height="13" viewBox="0 0 13 13"><rect x="0.500" y="0.500" width="11.500" height="11.500" fill="#fff" stroke="#4a4a4a" stroke-width="0.900"/><path d="M2.600 6.400 L5 8.800 L9.800 3.400" fill="none" stroke="#3a3a3a" stroke-width="1.100"/></svg>
<div class="a" style="left:751px;top:112px;width:29px;height:19px;background:#fffff2"></div>
<div class="c lnk" style="left:755px;top:116px;color:#1a1aff">Briši</div>
<svg class="a" style="left:39px;top:133px" width="21" height="17" viewBox="0 0 21 17"><use href="#rowic"/></svg>
<div class="c " style="left:64px;top:136px;color:#fff">335</div>
<div class="c " style="left:183px;top:136px;color:#fff">Probna usluga 14</div>
<div class="c lnk" style="left:517px;top:136px;color:#0010f0">K6...</div>
<div class="c " style="left:548px;top:136px;color:#fff">KO...</div>
<div class="c " style="left:579px;top:136px;color:#fff">US...</div>
<div class="c " style="left:612px;top:136px;color:#fff">PD...</div>
<div class="c" style="right:114px;top:136px;color:#fff;letter-spacing:-0.55px">347...</div>
<div class="c" style="right:82px;top:136px;color:#fff;letter-spacing:-0.55px">34...</div>
<svg class="a" style="left:721px;top:135px" width="13" height="13" viewBox="0 0 13 13"><rect x="0.500" y="0.500" width="11.500" height="11.500" fill="#fff" stroke="#4a4a4a" stroke-width="0.900"/><path d="M2.600 6.400 L5 8.800 L9.800 3.400" fill="none" stroke="#3a3a3a" stroke-width="1.100"/></svg>
<div class="a" style="left:751px;top:132px;width:29px;height:19px;background:#fffff2"></div>
<div class="c lnk" style="left:755px;top:136px;color:#1a1aff">Briši</div>
<svg class="a" style="left:39px;top:153px" width="21" height="17" viewBox="0 0 21 17"><use href="#rowic"/></svg>
<div class="c " style="left:64px;top:157px;color:#fff">340</div>
<div class="c " style="left:183px;top:157px;color:#fff">Probna usluga 15</div>
<div class="c lnk" style="left:517px;top:157px;color:#0010f0">K6...</div>
<div class="c " style="left:548px;top:157px;color:#fff">KO...</div>
<div class="c " style="left:579px;top:157px;color:#fff">US...</div>
<div class="c " style="left:612px;top:157px;color:#fff">PD...</div>
<div class="c" style="right:114px;top:157px;color:#fff;letter-spacing:-0.55px">159...</div>
<div class="c" style="right:82px;top:157px;color:#fff;letter-spacing:-0.55px">15...</div>
<svg class="a" style="left:721px;top:156px" width="13" height="13" viewBox="0 0 13 13"><rect x="0.500" y="0.500" width="11.500" height="11.500" fill="#fff" stroke="#4a4a4a" stroke-width="0.900"/><path d="M2.600 6.400 L5 8.800 L9.800 3.400" fill="none" stroke="#3a3a3a" stroke-width="1.100"/></svg>
<div class="a" style="left:751px;top:152px;width:29px;height:20px;background:#fffff2"></div>
<div class="c lnk" style="left:755px;top:157px;color:#1a1aff">Briši</div>
<svg class="a" style="left:39px;top:174px" width="21" height="17" viewBox="0 0 21 17"><use href="#rowic"/></svg>
<div class="c " style="left:64px;top:178px;color:#fff">358</div>
<div class="c " style="left:183px;top:178px;color:#fff">Probna usluga 16</div>
<div class="c lnk" style="left:517px;top:178px;color:#0010f0">K6...</div>
<div class="c " style="left:548px;top:178px;color:#fff">KO...</div>
<div class="c " style="left:579px;top:178px;color:#fff">US...</div>
<div class="c " style="left:612px;top:178px;color:#fff">PD...</div>
<div class="c" style="right:114px;top:178px;color:#fff;letter-spacing:-0.55px">0,00</div>
<div class="c" style="right:82px;top:178px;color:#fff;letter-spacing:-0.55px">0,00</div>
<svg class="a" style="left:721px;top:176px" width="13" height="13" viewBox="0 0 13 13"><rect x="0.500" y="0.500" width="11.500" height="11.500" fill="#fff" stroke="#4a4a4a" stroke-width="0.900"/><path d="M2.600 6.400 L5 8.800 L9.800 3.400" fill="none" stroke="#3a3a3a" stroke-width="1.100"/></svg>
<div class="a" style="left:751px;top:173px;width:29px;height:19px;background:#fffff2"></div>
<div class="c lnk" style="left:755px;top:178px;color:#1a1aff">Briši</div>
<svg class="a" style="left:39px;top:194px" width="21" height="17" viewBox="0 0 21 17"><use href="#rowic"/></svg>
<div class="c " style="left:64px;top:198px;color:#fff">379</div>
<div class="c " style="left:183px;top:198px;color:#fff">Probna usluga 17</div>
<div class="c lnk" style="left:517px;top:198px;color:#0010f0">K6...</div>
<div class="c " style="left:548px;top:198px;color:#fff">KO...</div>
<div class="c " style="left:579px;top:198px;color:#fff">US...</div>
<div class="c " style="left:612px;top:198px;color:#fff">PD...</div>
<div class="c" style="right:114px;top:198px;color:#fff;letter-spacing:-0.55px">90,12</div>
<div class="c" style="right:82px;top:198px;color:#fff;letter-spacing:-0.55px">90,...</div>
<svg class="a" style="left:721px;top:196px" width="13" height="13" viewBox="0 0 13 13"><rect x="0.500" y="0.500" width="11.500" height="11.500" fill="#fff" stroke="#4a4a4a" stroke-width="0.900"/><path d="M2.600 6.400 L5 8.800 L9.800 3.400" fill="none" stroke="#3a3a3a" stroke-width="1.100"/></svg>
<div class="a" style="left:751px;top:193px;width:29px;height:20px;background:#fffff2"></div>
<div class="c lnk" style="left:755px;top:198px;color:#1a1aff">Briši</div>
<svg class="a" style="left:39px;top:215px" width="21" height="17" viewBox="0 0 21 17"><use href="#rowic"/></svg>
<div class="c " style="left:64px;top:218px;color:#1a1a1a">386</div>
<div class="c " style="left:183px;top:218px;color:#1a1a1a">Probna usluga 18</div>
<div class="c lnk" style="left:517px;top:218px;color:#1a1aff">D...</div>
<div class="c " style="left:548px;top:218px;color:#1a1a1a">KO...</div>
<div class="c " style="left:579px;top:218px;color:#1a1a1a">US...</div>
<div class="c " style="left:612px;top:218px;color:#1a1a1a">PD...</div>
<div class="c" style="right:114px;top:218px;color:#1a1a1a;letter-spacing:-0.55px">398...</div>
<div class="c" style="right:82px;top:218px;color:#1a1a1a;letter-spacing:-0.55px">39...</div>
<svg class="a" style="left:721px;top:217px" width="13" height="13" viewBox="0 0 13 13"><rect x="0.500" y="0.500" width="11.500" height="11.500" fill="#fff" stroke="#4a4a4a" stroke-width="0.900"/><path d="M2.600 6.400 L5 8.800 L9.800 3.400" fill="none" stroke="#3a3a3a" stroke-width="1.100"/></svg>
<div class="c lnk" style="left:755px;top:218px;color:#1a1aff">Briši</div>
<svg class="a" style="left:39px;top:235px" width="21" height="17" viewBox="0 0 21 17"><use href="#rowic"/></svg>
<div class="c " style="left:64px;top:238px;color:#1a1a1a">422</div>
<div class="c " style="left:183px;top:238px;color:#1a1a1a">Probna usluga 19</div>
<div class="c lnk" style="left:517px;top:238px;color:#1a1aff">D...</div>
<div class="c " style="left:548px;top:238px;color:#1a1a1a">KO...</div>
<div class="c " style="left:579px;top:238px;color:#1a1a1a">US...</div>
<div class="c " style="left:612px;top:238px;color:#1a1a1a">PD...</div>
<div class="c" style="right:114px;top:238px;color:#1a1a1a;letter-spacing:-0.55px">398...</div>
<div class="c" style="right:82px;top:238px;color:#1a1a1a;letter-spacing:-0.55px">39...</div>
<svg class="a" style="left:721px;top:237px" width="13" height="13" viewBox="0 0 13 13"><rect x="0.500" y="0.500" width="11.500" height="11.500" fill="#fff" stroke="#4a4a4a" stroke-width="0.900"/><path d="M2.600 6.400 L5 8.800 L9.800 3.400" fill="none" stroke="#3a3a3a" stroke-width="1.100"/></svg>
<div class="c lnk" style="left:755px;top:238px;color:#1a1aff">Briši</div>
<svg class="a" style="left:39px;top:255px" width="21" height="17" viewBox="0 0 21 17"><use href="#rowic"/></svg>
<div class="c " style="left:64px;top:259px;color:#1a1a1a">61</div>
<div class="c " style="left:183px;top:259px;color:#1a1a1a">Probna usluga 2</div>
<div class="c lnk" style="left:517px;top:259px;color:#1a1aff">D...</div>
<div class="c " style="left:548px;top:259px;color:#1a1a1a">KO...</div>
<div class="c " style="left:579px;top:259px;color:#1a1a1a">US...</div>
<div class="c " style="left:612px;top:259px;color:#1a1a1a">PD...</div>
<div class="c" style="right:114px;top:259px;color:#1a1a1a;letter-spacing:-0.55px">7,96</div>
<div class="c" style="right:82px;top:259px;color:#1a1a1a;letter-spacing:-0.55px">7,96</div>
<svg class="a" style="left:721px;top:258px" width="13" height="13" viewBox="0 0 13 13"><rect x="0.500" y="0.500" width="11.500" height="11.500" fill="#fff" stroke="#4a4a4a" stroke-width="0.900"/><path d="M2.600 6.400 L5 8.800 L9.800 3.400" fill="none" stroke="#3a3a3a" stroke-width="1.100"/></svg>
<div class="c lnk" style="left:755px;top:259px;color:#1a1aff">Briši</div>
<svg class="a" style="left:39px;top:276px" width="21" height="17" viewBox="0 0 21 17"><use href="#rowic"/></svg>
<div class="c " style="left:64px;top:280px;color:#1a1a1a">446</div>
<div class="c " style="left:183px;top:280px;color:#1a1a1a">Probna usluga 20</div>
<div class="c lnk" style="left:517px;top:280px;color:#1a1aff">D...</div>
<div class="c " style="left:548px;top:280px;color:#1a1a1a">KO...</div>
<div class="c " style="left:579px;top:280px;color:#1a1a1a">US...</div>
<div class="c " style="left:612px;top:280px;color:#1a1a1a">PD...</div>
<div class="c" style="right:114px;top:280px;color:#1a1a1a;letter-spacing:-0.55px">132...</div>
<div class="c" style="right:82px;top:280px;color:#1a1a1a;letter-spacing:-0.55px">13...</div>
<svg class="a" style="left:721px;top:278px" width="13" height="13" viewBox="0 0 13 13"><rect x="0.500" y="0.500" width="11.500" height="11.500" fill="#fff" stroke="#4a4a4a" stroke-width="0.900"/><path d="M2.600 6.400 L5 8.800 L9.800 3.400" fill="none" stroke="#3a3a3a" stroke-width="1.100"/></svg>
<div class="c lnk" style="left:755px;top:280px;color:#1a1aff">Briši</div>
<svg class="a" style="left:39px;top:296px" width="21" height="17" viewBox="0 0 21 17"><use href="#rowic"/></svg>
<div class="c " style="left:64px;top:300px;color:#1a1a1a">462</div>
<div class="c " style="left:183px;top:300px;color:#1a1a1a">Probna usluga 21</div>
<div class="c lnk" style="left:517px;top:300px;color:#1a1aff">D...</div>
<div class="c " style="left:548px;top:300px;color:#1a1a1a">KO...</div>
<div class="c " style="left:579px;top:300px;color:#1a1a1a">US...</div>
<div class="c " style="left:612px;top:300px;color:#1a1a1a">PD...</div>
<div class="c" style="right:114px;top:300px;color:#1a1a1a;letter-spacing:-0.55px">3,98</div>
<div class="c" style="right:82px;top:300px;color:#1a1a1a;letter-spacing:-0.55px">3,98</div>
<svg class="a" style="left:721px;top:298px" width="13" height="13" viewBox="0 0 13 13"><rect x="0.500" y="0.500" width="11.500" height="11.500" fill="#fff" stroke="#4a4a4a" stroke-width="0.900"/><path d="M2.600 6.400 L5 8.800 L9.800 3.400" fill="none" stroke="#3a3a3a" stroke-width="1.100"/></svg>
<div class="c lnk" style="left:755px;top:300px;color:#1a1aff">Briši</div>
<svg class="a" style="left:39px;top:317px" width="21" height="17" viewBox="0 0 21 17"><use href="#rowic"/></svg>
<div class="c " style="left:64px;top:320px;color:#1a1a1a">465</div>
<div class="c " style="left:183px;top:320px;color:#1a1a1a">Probna usluga 22</div>
<div class="c lnk" style="left:517px;top:320px;color:#1a1aff">D...</div>
<div class="c " style="left:548px;top:320px;color:#1a1a1a">KO...</div>
<div class="c " style="left:579px;top:320px;color:#1a1a1a">US...</div>
<div class="c " style="left:612px;top:320px;color:#1a1a1a">PD...</div>
<div class="c" style="right:114px;top:320px;color:#1a1a1a;letter-spacing:-0.55px">0,00</div>
<div class="c" style="right:82px;top:320px;color:#1a1a1a;letter-spacing:-0.55px">0,00</div>
<svg class="a" style="left:721px;top:319px" width="13" height="13" viewBox="0 0 13 13"><rect x="0.500" y="0.500" width="11.500" height="11.500" fill="#fff" stroke="#4a4a4a" stroke-width="0.900"/><path d="M2.600 6.400 L5 8.800 L9.800 3.400" fill="none" stroke="#3a3a3a" stroke-width="1.100"/></svg>
<div class="c lnk" style="left:755px;top:320px;color:#1a1aff">Briši</div>
<svg class="a" style="left:39px;top:337px" width="21" height="17" viewBox="0 0 21 17"><use href="#rowic"/></svg>
<div class="c " style="left:64px;top:340px;color:#1a1a1a">473</div>
<div class="c " style="left:183px;top:340px;color:#1a1a1a">Probna usluga 23</div>
<div class="c lnk" style="left:517px;top:340px;color:#1a1aff">D...</div>
<div class="c " style="left:548px;top:340px;color:#1a1a1a">KO...</div>
<div class="c " style="left:579px;top:340px;color:#1a1a1a">US...</div>
<div class="c " style="left:612px;top:340px;color:#1a1a1a">PD...</div>
<div class="c" style="right:114px;top:340px;color:#1a1a1a;letter-spacing:-0.55px">5,60</div>
<div class="c" style="right:82px;top:340px;color:#1a1a1a;letter-spacing:-0.55px">5,60</div>
<svg class="a" style="left:721px;top:339px" width="13" height="13" viewBox="0 0 13 13"><rect x="0.500" y="0.500" width="11.500" height="11.500" fill="#fff" stroke="#4a4a4a" stroke-width="0.900"/><path d="M2.600 6.400 L5 8.800 L9.800 3.400" fill="none" stroke="#3a3a3a" stroke-width="1.100"/></svg>
<div class="c lnk" style="left:755px;top:340px;color:#1a1aff">Briši</div>
<svg class="a" style="left:39px;top:357px" width="21" height="17" viewBox="0 0 21 17"><use href="#rowic"/></svg>
<div class="c " style="left:64px;top:361px;color:#1a1a1a">22</div>
<div class="c " style="left:183px;top:361px;color:#1a1a1a">Probna usluga 24</div>
<div class="c lnk" style="left:517px;top:361px;color:#1a1aff">D...</div>
<div class="c " style="left:548px;top:361px;color:#1a1a1a">KO...</div>
<div class="c " style="left:579px;top:361px;color:#1a1a1a">KA...</div>
<div class="c " style="left:612px;top:361px;color:#1a1a1a">BE...</div>
<div class="c" style="right:114px;top:361px;color:#1a1a1a;letter-spacing:-0.55px">504...</div>
<div class="c" style="right:82px;top:361px;color:#1a1a1a;letter-spacing:-0.55px">50...</div>
<svg class="a" style="left:721px;top:360px" width="13" height="13" viewBox="0 0 13 13"><rect x="0.500" y="0.500" width="11.500" height="11.500" fill="#fff" stroke="#4a4a4a" stroke-width="0.900"/><path d="M2.600 6.400 L5 8.800 L9.800 3.400" fill="none" stroke="#3a3a3a" stroke-width="1.100"/></svg>
<div class="c lnk" style="left:755px;top:361px;color:#1a1aff">Briši</div>
<svg class="a" style="left:39px;top:378px" width="21" height="17" viewBox="0 0 21 17"><use href="#rowic"/></svg>
<div class="c " style="left:64px;top:382px;color:#1a1a1a">733</div>
<div class="c " style="left:183px;top:382px;color:#1a1a1a">Probna usluga 25</div>
<div class="c lnk" style="left:517px;top:382px;color:#1a1aff">D...</div>
<div class="c " style="left:548px;top:382px;color:#1a1a1a">KO...</div>
<div class="c " style="left:579px;top:382px;color:#1a1a1a">NA...</div>
<div class="c " style="left:612px;top:382px;color:#1a1a1a">PD...</div>
<div class="c" style="right:114px;top:382px;color:#1a1a1a;letter-spacing:-0.55px">130...</div>
<div class="c" style="right:82px;top:382px;color:#1a1a1a;letter-spacing:-0.55px">13...</div>
<svg class="a" style="left:721px;top:380px" width="13" height="13" viewBox="0 0 13 13"><rect x="0.500" y="0.500" width="11.500" height="11.500" fill="#fff" stroke="#4a4a4a" stroke-width="0.900"/><path d="M2.600 6.400 L5 8.800 L9.800 3.400" fill="none" stroke="#3a3a3a" stroke-width="1.100"/></svg>
<div class="c lnk" style="left:755px;top:382px;color:#1a1aff">Briši</div>
<svg class="a" style="left:39px;top:398px" width="21" height="17" viewBox="0 0 21 17"><use href="#rowic"/></svg>
<div class="c " style="left:64px;top:402px;color:#1a1a1a">62</div>
<div class="c " style="left:183px;top:402px;color:#1a1a1a">Probna usluga 3</div>
<div class="c lnk" style="left:517px;top:402px;color:#1a1aff">D...</div>
<div class="c " style="left:548px;top:402px;color:#1a1a1a">KO...</div>
<div class="c " style="left:579px;top:402px;color:#1a1a1a">US...</div>
<div class="c " style="left:612px;top:402px;color:#1a1a1a">PD...</div>
<div class="c" style="right:114px;top:402px;color:#1a1a1a;letter-spacing:-0.55px">30,00</div>
<div class="c" style="right:82px;top:402px;color:#1a1a1a;letter-spacing:-0.55px">30,...</div>
<svg class="a" style="left:721px;top:400px" width="13" height="13" viewBox="0 0 13 13"><rect x="0.500" y="0.500" width="11.500" height="11.500" fill="#fff" stroke="#4a4a4a" stroke-width="0.900"/><path d="M2.600 6.400 L5 8.800 L9.800 3.400" fill="none" stroke="#3a3a3a" stroke-width="1.100"/></svg>
<div class="c lnk" style="left:755px;top:402px;color:#1a1aff">Briši</div>
<svg class="a" style="left:39px;top:419px" width="21" height="17" viewBox="0 0 21 17"><use href="#rowic"/></svg>
<div class="c " style="left:64px;top:422px;color:#1a1a1a">63</div>
<div class="c " style="left:183px;top:422px;color:#1a1a1a">Probna usluga 4</div>
<div class="c lnk" style="left:517px;top:422px;color:#1a1aff">D...</div>
<div class="c " style="left:548px;top:422px;color:#1a1a1a">KO...</div>
<div class="c " style="left:579px;top:422px;color:#1a1a1a">US...</div>
<div class="c " style="left:612px;top:422px;color:#1a1a1a">PD...</div>
<div class="c" style="right:114px;top:422px;color:#1a1a1a;letter-spacing:-0.55px">530...</div>
<div class="c" style="right:82px;top:422px;color:#1a1a1a;letter-spacing:-0.55px">53...</div>
<svg class="a" style="left:721px;top:421px" width="13" height="13" viewBox="0 0 13 13"><rect x="0.500" y="0.500" width="11.500" height="11.500" fill="#fff" stroke="#4a4a4a" stroke-width="0.900"/><path d="M2.600 6.400 L5 8.800 L9.800 3.400" fill="none" stroke="#3a3a3a" stroke-width="1.100"/></svg>
<div class="c lnk" style="left:755px;top:422px;color:#1a1aff">Briši</div>
<svg class="a" style="left:39px;top:439px" width="21" height="17" viewBox="0 0 21 17"><use href="#rowic"/></svg>
<div class="c " style="left:64px;top:442px;color:#1a1a1a">64</div>
<div class="c " style="left:183px;top:442px;color:#1a1a1a">Probna usluga 5</div>
<div class="c lnk" style="left:517px;top:442px;color:#1a1aff">D...</div>
<div class="c " style="left:548px;top:442px;color:#1a1a1a">KO...</div>
<div class="c " style="left:579px;top:442px;color:#1a1a1a">US...</div>
<div class="c " style="left:612px;top:442px;color:#1a1a1a">PD...</div>
<div class="c" style="right:114px;top:442px;color:#1a1a1a;letter-spacing:-0.55px">2,39</div>
<div class="c" style="right:82px;top:442px;color:#1a1a1a;letter-spacing:-0.55px">2,39</div>
<svg class="a" style="left:721px;top:441px" width="13" height="13" viewBox="0 0 13 13"><rect x="0.500" y="0.500" width="11.500" height="11.500" fill="#fff" stroke="#4a4a4a" stroke-width="0.900"/><path d="M2.600 6.400 L5 8.800 L9.800 3.400" fill="none" stroke="#3a3a3a" stroke-width="1.100"/></svg>
<div class="c lnk" style="left:755px;top:442px;color:#1a1aff">Briši</div>
<svg class="a" style="left:39px;top:459px" width="21" height="17" viewBox="0 0 21 17"><use href="#rowic"/></svg>
<svg class="a" style="left:721px;top:462px" width="13" height="13" viewBox="0 0 13 13"><rect x="0.500" y="0.500" width="11.500" height="11.500" fill="#fff" stroke="#4a4a4a" stroke-width="0.900"/><path d="M2.600 6.400 L5 8.800 L9.800 3.400" fill="none" stroke="#3a3a3a" stroke-width="1.100"/></svg>
<svg class="a" style="left:4px;top:198px" width="8" height="11"><path d="M1.500 0.500 L6.500 5.500 L1.500 10.500 Z" fill="#333"/></svg>
</div>
<div class="a" style="left:784px;top:165px;width:16px;height:463px;background:#f0f0f0"></div>
<div class="a" style="left:785px;top:180px;width:14px;height:352px;background:#cdcdcd"></div>
<svg class="a" style="left:787px;top:168px" width="10" height="8"><path d="M1 6 L5 2 L9 6" fill="none" stroke="#505050" stroke-width="1.500"/></svg>
<svg class="a" style="left:787px;top:617px" width="10" height="8"><path d="M1 2 L5 6 L9 2" fill="none" stroke="#505050" stroke-width="1.500"/></svg>
<div class="a" style="left:3px;top:628px;width:797px;height:22px;background:#fff"></div>
<div class="a" style="left:103px;top:632px;width:14px;height:17px;background:#f0f0f0"></div>
<div class="t" style="left:9.500px;top:635px;font-size:11.5px;letter-spacing:-0.850px;color:#6e6e6e">Šifra usluge</div>
<svg class="a" style="left:106.500px;top:639px" width="8" height="5"><path d="M0.500 0.500 H7.500 L4 4.500 Z" fill="#222"/></svg>
<div class="t" style="left:126px;top:634px;font-size:10px;letter-spacing:0"><span style="color:#ff2222;text-decoration:underline;letter-spacing:-0.900px">SVE</span><span style="letter-spacing:0"> </span><span class="lnk">1</span> <span class="lnk">2</span> <span class="lnk">3</span> <span class="lnk">4</span> <span class="lnk">6</span> <span class="lnk">7</span></div>
<div class="a" style="left:3px;top:650px;width:797px;height:21px;background:linear-gradient(#6f93c6 0,#6f93c6 1px,#d9e7f9 2px,#c3d9f5 40%,#a9c6ec 55%,#b9d2f2 100%)"></div>
<div class="a" style="left:744px;top:653px;width:13px;height:13px;border-radius:50%;background:radial-gradient(circle at 35% 30%,#b4bfd2,#73829c)"></div>
<div class="a" style="left:759px;top:653px;width:13px;height:13px;border-radius:50%;background:radial-gradient(circle at 35% 30%,#d6deeb,#a6b4cb)"></div>
<div class="a" style="left:774px;top:653px;width:13px;height:13px;border-radius:50%;background:radial-gradient(circle at 35% 30%,#bcc7d9,#8290aa)"></div>
<svg class="a" style="left:788px;top:658px" width="12" height="12"><g fill="#5f7ba8"><rect x="8" y="0" width="2" height="2"/><rect x="4" y="4" width="2" height="2"/><rect x="8" y="4" width="2" height="2"/><rect x="0" y="8" width="2" height="2"/><rect x="4" y="8" width="2" height="2"/><rect x="8" y="8" width="2" height="2"/></g></svg>
<svg class="a" style="left:330px;top:290px" width="272" height="138" viewBox="330 290 272 138"><rect x="333.400" y="292.500" width="264.500" height="132.100" fill="#ff0000"/><rect x="337" y="295.700" width="257" height="125.200" fill="#ffffff"/><path d="M337.200 295.700 V420.900" stroke="#7a0028" stroke-width="0.500"/></svg>
<div class="a" style="left:337px;top:379px;width:257px;height:42px;background:#f0f0f0;border-top:1px solid #d2d2d2;box-sizing:border-box"></div>
<div class="t" id="rez" style="left:341px;top:302px;font-size:11.5px;color:#222">Rezultat</div>
<svg class="a" style="left:574px;top:302px" width="10" height="10"><path d="M1 1 L9 9 M9 1 L1 9" stroke="#c4c4c4" stroke-width="1"/></svg>
<svg class="a" style="left:351px;top:332px" width="32" height="32" viewBox="0 0 32 32"><defs><linearGradient id="ig" x1="0" y1="0" x2="0" y2="1"><stop offset="0" stop-color="#6a6ada"/><stop offset="0.450" stop-color="#4040b8"/><stop offset="1" stop-color="#202088"/></linearGradient></defs><circle cx="16" cy="16" r="14.500" fill="#d2d2d6" stroke="#94949a" stroke-width="1"/><circle cx="16" cy="16" r="12.700" fill="url(#ig)"/><text x="16.200" y="24.600" text-anchor="middle" font-family="Liberation Serif, serif" font-style="italic" font-weight="bold" font-size="25" letter-spacing="0" fill="#f4f4f6" stroke="#f4f4f6" stroke-width="0.500">i</text></svg>
<div class="t" id="msg" style="left:401px;top:341px;font-size:11.5px;color:#111">KPD2025 šifra je uspješno ažurirana.</div>
<div class="a" style="left:514px;top:391px;width:67px;height:21px;box-sizing:border-box;border:2px solid #0078d7;background:#e1e1e1"></div>
<div class="t" id="ured" style="left:530px;top:396px;font-size:11.5px;color:#111">U redu</div>
<svg class="a" style="left:539px;top:387px" width="13" height="19" viewBox="0 0 13 19"><path d="M1 1 V14.500 L4.200 11.600 L6.600 17.200 L8.800 16.200 L6.400 10.800 H10.800 Z" fill="#fff" stroke="#1a1a1a" stroke-width="0.800" stroke-linejoin="round"/></svg>
</body></html>
